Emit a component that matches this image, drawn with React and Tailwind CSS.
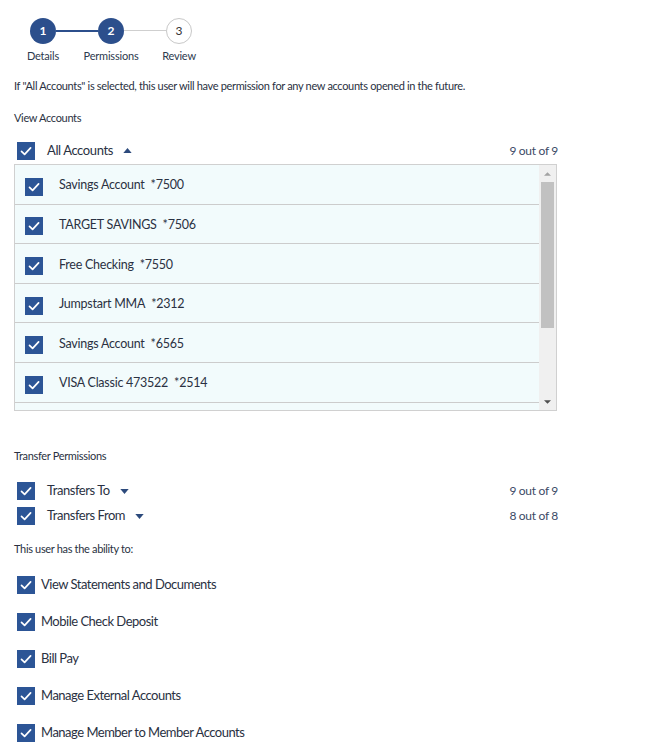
import React from "react";

const font = { fontFamily: "Lato, 'Noto Sans', sans-serif" };

function Check() {
  return (
    <span className="w-[18px] h-[18px] bg-[#2c5596] flex items-center justify-center shrink-0">
      <svg viewBox="0 0 18 18" className="w-[18px] h-[18px]" fill="none">
        <path d="M4.5 9.3 L7.6 12.3 L13.6 5.8" stroke="white" strokeWidth="1.7" strokeLinecap="round" strokeLinejoin="round" />
      </svg>
    </span>
  );
}

function Caret({ up }) {
  return (
    <svg viewBox="0 0 10 6" className="w-[9px] h-[5px]">
      {up ? <path d="M0 6 L5 0 L10 6Z" fill="#2c4a7c" /> : <path d="M0 0 L5 6 L10 0Z" fill="#2c4a7c" />}
    </svg>
  );
}

const accounts = [
  ["Savings Account", "*7500"],
  ["TARGET SAVINGS", "*7506"],
  ["Free Checking", "*7550"],
  ["Jumpstart MMA", "*2312"],
  ["Savings Account", "*6565"],
  ["VISA Classic 473522", "*2514"],
];

const abilities = [
  "View Statements and Documents",
  "Mobile Check Deposit",
  "Bill Pay",
  "Manage External Accounts",
  "Manage Member to Member Accounts",
];

function Step({ n, label, active }) {
  return (
    <div className="flex flex-col items-center w-[68px]">
      <div
        className={`w-[26px] h-[26px] rounded-full flex items-center justify-center text-[12px] font-bold ${
          active ? "bg-[#2c4f8c] text-white" : "bg-white border border-[#c8c8c8] text-[#333] font-normal"
        }`}
      >
        {n}
      </div>
      <div className="text-[11px] text-[#2d3a4e] mt-[6px] leading-none tracking-[-0.2px]">{label}</div>
    </div>
  );
}

export default function App() {
  return (
    <div className="w-[650px] h-[747px] bg-white overflow-hidden text-[#2a3142]" style={font}>
      {/* stepper */}
      <div className="relative flex pl-[9px] pt-[18px]">
        <div className="absolute left-[56px] top-[30px] w-[42px] h-[1.5px] bg-[#2c4f8c]" />
        <div className="absolute left-[124px] top-[30px] w-[42px] h-px bg-[#cfcfcf]" />
        <Step n="1" label="Details" active />
        <Step n="2" label="Permissions" active />
        <Step n="3" label="Review" />
      </div>

      <div className="pl-[14px] w-[557px]">
        <p className="text-[11px] mt-[18px] leading-[14px] tracking-[-0.33px]">
          If "All Accounts" is selected, this user will have permission for any new accounts opened in the future.
        </p>
        <p className="text-[11px] mt-[18px] leading-[14px] tracking-[-0.33px]">View Accounts</p>

        <div className="flex items-center mt-[17px] pl-[3px] h-[18px]">
          <Check />
          <span className="text-[13px] ml-[12px] tracking-[-0.4px]">All Accounts</span>
          <span className="ml-[10px] mb-[2px]"><Caret up /></span>
          <span className="ml-auto text-[12px] text-[#3b4a66] mr-[-1px] tracking-[-0.3px]">9 out of 9</span>
        </div>

        {/* list */}
        <div className="mt-[4px] h-[247px] border border-[#d0d0d0] flex bg-[#f2fbfc] overflow-hidden">
          <div className="flex-1 flex flex-col">
            {accounts.map(([name, num], i) => (
              <div key={i} className="h-[39.6px] shrink-0 flex items-center pl-[10px] pt-[4px] border-b border-[#cccccc]">
                <span className="mt-[1px]"><Check /></span>
                <span className="text-[12.5px] ml-[16px] mb-[1px] tracking-[-0.25px]">{name}</span>
                <span className="text-[12.5px] ml-[6px] mb-[1px] tracking-[-0.25px]">{num}</span>
              </div>
            ))}
          </div>
          <div className="w-[17px] bg-[#f0f0f0] flex flex-col items-center">
            <div className="h-[17px] flex items-center justify-center">
              <svg viewBox="0 0 8 4" className="w-[7px] h-[4px]"><path d="M0 4 L4 0 L8 4Z" fill="#a3a3a3" /></svg>
            </div>
            <div className="w-[13px] h-[146px] bg-[#c1c1c1]" />
            <div className="flex-1" />
            <div className="h-[17px] flex items-center justify-center">
              <svg viewBox="0 0 8 4" className="w-[7px] h-[4px]"><path d="M0 0 L4 4 L8 0Z" fill="#505050" /></svg>
            </div>
          </div>
        </div>

        <p className="text-[11px] mt-[38px] leading-[14px] tracking-[-0.33px]">Transfer Permissions</p>

        <div className="flex items-center mt-[19px] pl-[3px] h-[18px]">
          <Check />
          <span className="text-[13px] ml-[12px] tracking-[-0.45px]">Transfers To</span>
          <span className="ml-[10px]"><Caret /></span>
          <span className="ml-auto text-[12px] text-[#3b4a66] mr-[-1px] tracking-[-0.3px]">9 out of 9</span>
        </div>
        <div className="flex items-center mt-[7px] pl-[3px] h-[18px]">
          <Check />
          <span className="text-[13px] ml-[12px] tracking-[-0.45px]">Transfers From</span>
          <span className="ml-[10px]"><Caret /></span>
          <span className="ml-auto text-[12px] text-[#3b4a66] mr-[-1px] tracking-[-0.3px]">8 out of 8</span>
        </div>

        <p className="text-[11px] mt-[17px] leading-[14px] tracking-[-0.33px]">This user has the ability to:</p>

        <div className="flex flex-col gap-[19px] mt-[20px] pl-[3px]">
          {abilities.map((a) => (
            <div key={a} className="flex items-center h-[18px]">
              <Check />
              <span className="text-[13px] ml-[6px] tracking-[-0.5px]">{a}</span>
            </div>
          ))}
        </div>
      </div>
    </div>
  );
}
